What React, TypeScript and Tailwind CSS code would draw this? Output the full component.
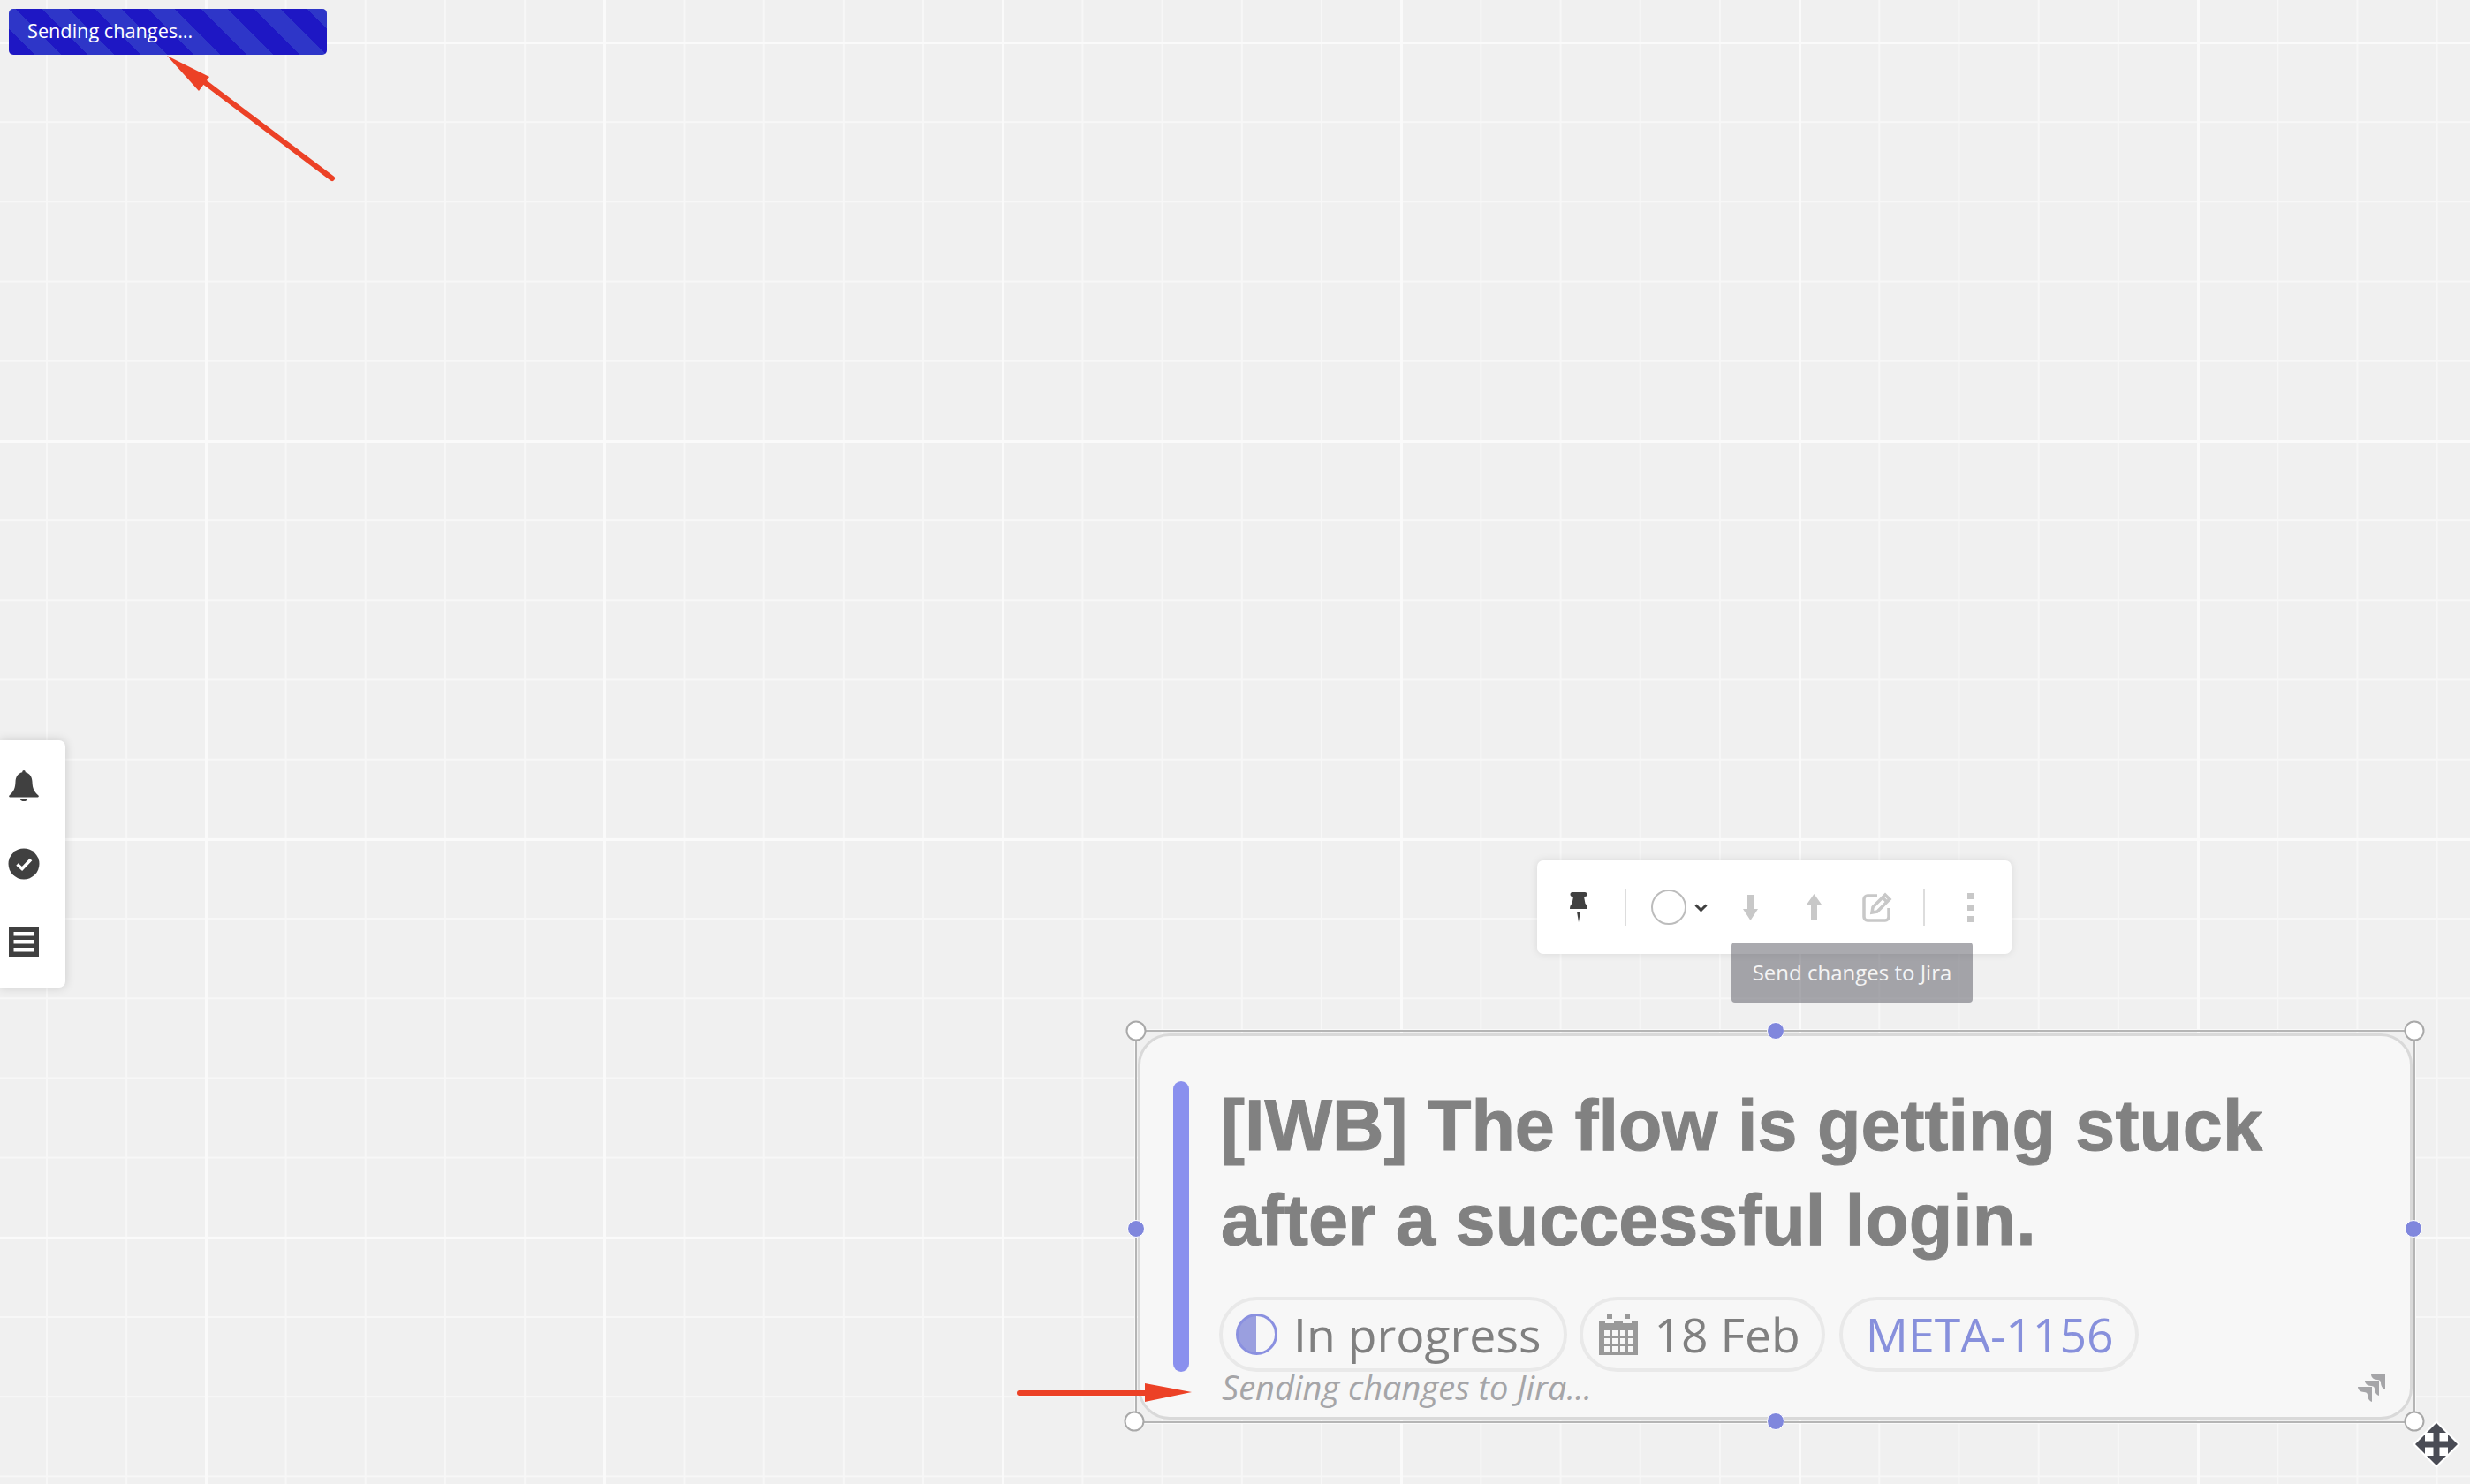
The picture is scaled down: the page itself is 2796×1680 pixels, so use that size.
const gridClass =
    "bg-[#f0f0f0] bg-[linear-gradient(to_right,#fafafa_3px,transparent_3px),linear-gradient(to_bottom,#fafafa_3px,transparent_3px),linear-gradient(to_right,#f7f7f7_2px,transparent_2px),linear-gradient(to_bottom,#f7f7f7_2px,transparent_2px)] [background-size:451px_451px,451px_451px,90.2px_90.2px,90.2px_90.2px] [background-position:232px_0,0_47px,52px_0,0_47px]"

const openSans = "font-['Open_Sans',sans-serif]"

const RedArrow = ({ className, viewBox, line, head }: { className: string; viewBox: string; line: string; head: string }) => (
    <svg className={className} viewBox={viewBox}>
        <path d={line} stroke="#ec4126" strokeWidth="6" strokeLinecap="round" fill="none" />
        <path d={head} fill="#ec4126" />
    </svg>
)

const Banner = () => (
    <div className={`absolute left-[10px] top-[10px] flex h-[52px] w-[360px] items-center rounded-[5px] pb-[1px] pl-[21px] text-[21.7px] text-white bg-[#1e17c4] bg-[repeating-linear-gradient(45deg,#1e17c4_0,#1e17c4_21.2px,#2e36c8_21.2px,#2e36c8_42.4px)] ${openSans}`}>
        Sending changes...
    </div>
)

const SidePanel = () => (
    <div className="absolute left-0 top-[838px] flex h-[280px] w-[74px] flex-col items-center gap-[53px] rounded-r-[7px] bg-white pl-[1px] pr-[21px] pt-[33px] shadow-[0_0_12px_rgba(0,0,0,0.16)]">
        <svg className="size-[36px] shrink-0" viewBox="0 0 36 36" fill="#404040">
            <path d="M18 1c1 0 1.700 .8 1.800 2.200 5 1.300 7.500 5.200 7.700 10.800.2 6.500 1.500 11 7 15.500.8.800.2 2-.8 2H2.300c-1 0-1.600-1.200-.8-2C7 25 8.300 20.500 8.500 14c.2-5.600 2.700-9.500 7.700-10.800C16.300 1.800 17 1 18 1z" />
            <path d="M13.500 33h9c-.3 2-2.200 3.200-4.500 3.200s-4.200-1.200-4.500-3.200z" />
        </svg>
        <svg className="size-[36px] shrink-0" viewBox="0 0 36 36">
            <circle cx="18" cy="18" r="17.500" fill="#404040" />
            <path d="M10.500 18.500l5.500 5 10-10.500" stroke="#fff" strokeWidth="3.600" fill="none" />
        </svg>
        <svg className="size-[34px] shrink-0" viewBox="0 0 34 34">
            <rect width="34" height="34" fill="#404040" />
            <rect x="5.500" y="6" width="23" height="4.500" fill="#fff" />
            <rect x="5.500" y="15" width="23" height="4.500" fill="#fff" />
            <rect x="5.500" y="24" width="23" height="4.500" fill="#fff" />
        </svg>
    </div>
)

const Toolbar = () => (
    <div className="absolute left-[1740px] top-[974px] flex h-[106px] w-[537px] items-start rounded-[7px] bg-white pt-[36px] shadow-[0_0_10px_rgba(0,0,0,0.1)]">
        <svg className="ml-[37px] h-[34px] w-[20px] shrink-0" viewBox="0 0 20 34" fill="#404040">
            <path d="M3 0h14a2.500 2.500 0 0 1 0 5h-1l1.500 8c1.500 1 2.500 3 2.500 6H0c0-3 1-5 2.500-6L4 5H3a2.500 2.500 0 0 1 0-5z" />
            <path d="M8 22h4l-2 12z" />
        </svg>
        <div className="ml-[42px] -mt-[4px] h-[42px] w-[2px] shrink-0 bg-[#dddddd]" />
        <div className="ml-[28px] -mt-[3px] size-[40px] shrink-0 rounded-full border-2 border-[#bcbcbc]" />
        <svg className="ml-[9px] mt-[13px] h-[10px] w-[15px] shrink-0" viewBox="0 0 15 10">
            <path d="M1.500 1.500l6 6 6-6" stroke="#404040" strokeWidth="3" fill="none" />
        </svg>
        <svg className="ml-[40px] mt-[3px] h-[29px] w-[17px] shrink-0" viewBox="0 0 17 29" fill="#c8c8c8">
            <path d="M5 0h7v16h5L8.500 29 0 16h5z" />
        </svg>
        <svg className="ml-[55px] mt-[2px] h-[29px] w-[17px] shrink-0" viewBox="0 0 17 29" fill="#c8c8c8">
            <path d="M5 29h7V12h5L8.500 0 0 12h5z" />
        </svg>
        <svg className="ml-[46px] h-[34px] w-[34px] shrink-0" viewBox="0 0 34 34" fill="none" stroke="#c8c8c8" strokeWidth="3.500">
            <path d="M17 4H6a4 4 0 0 0-4 4v20a4 4 0 0 0 4 4h20a4 4 0 0 0 4-4V18" />
            <path d="M12 17L26 3l5 5-14 14-6 1z" />
            <path d="M23 6l5 5" />
        </svg>
        <div className="ml-[35px] -mt-[4px] h-[42px] w-[2px] shrink-0 bg-[#dddddd]" />
        <div className="ml-[48px] mt-[1px] flex shrink-0 flex-col gap-[6px]">
            <div className="size-[7px] bg-[#c8c8c8]" />
            <div className="size-[7px] bg-[#c8c8c8]" />
            <div className="size-[7px] bg-[#c8c8c8]" />
        </div>
    </div>
)

const Tooltip = () => (
    <div className={`absolute left-[1960px] top-[1067px] flex h-[68px] w-[273px] items-center justify-center rounded-[4px] bg-[rgba(85,86,96,0.5)] text-[24px] text-[#f4f4f4] ${openSans}`}>
        Send changes to Jira
    </div>
)

const Pill = ({ children, className }: { children: React.ReactNode; className?: string }) => (
    <div className={`flex h-[85px] items-center gap-[18px] rounded-full border-[4px] border-[#e9e9e9] text-[53.5px] leading-none ${className ?? ""}`}>
        {children}
    </div>
)

const Card = () => (
    <div className="relative flex h-[437px] w-[1443px] rounded-[36px] border-[3px] border-[#d9d9d9] bg-[#f7f7f7] pl-[37px] pt-[51px]">
        <div className="h-[329px] w-[18px] shrink-0 rounded-full bg-[#8a90ee]" />
        <div className="ml-[36px] flex flex-col">
            <div className="-mt-[3px] font-['Liberation_Sans',sans-serif] text-[81px] font-bold leading-[107px] text-[#818181] [-webkit-text-stroke:1px_#818181]">
                [IWB] The flow is getting stuck<br />after a successful login.
            </div>
            <div className={`-ml-[2px] mt-[33px] flex gap-[14px] text-[#808080] ${openSans}`}>
                <Pill className="pl-[15px] pr-[26px]">
                    <div className="size-[47px] shrink-0 rounded-full border-[3px] border-[#8a90e0] bg-[linear-gradient(to_right,#9a9fdf_50%,transparent_50%)]" />
                    In progress
                </Pill>
                <Pill className="pl-[18px] pr-[24px]">
                    <svg className="h-[46px] w-[44px] shrink-0" viewBox="0 0 44 46" fill="#999999">
                        <path d="M9 0h6v5H9zM29 0h6v5h-6z" />
                        <path
                            fillRule="evenodd"
                            d="M0 7h7v3h10V7h10v3h10V7h7v39H0zM6 18v6h6v-6zm9 0v6h6v-6zm9 0v6h6v-6zm9 0v6h6v-6zM6 27v6h6v-6zm9 0v6h6v-6zm9 0v6h6v-6zm9 0v6h6v-6zM6 36v6h6v-6zm9 0v6h6v-6zm9 0v6h6v-6zm9 0v6h6v-6z"
                        />
                    </svg>
                    18 Feb
                </Pill>
                <Pill className="ml-[2px] pl-[26px] pr-[24px] text-[#8790dc]">META-1156</Pill>
            </div>
            <div className={`-mt-[8px] ml-[1px] text-[38px] italic leading-[50px] text-[#a5a5a8] ${openSans}`}>
                Sending changes to Jira...
            </div>
        </div>
        <svg className="absolute bottom-[17px] right-[28px] size-[31px]" viewBox="0 0 31 31" fill="#a5a5a8">
            <path d="M15 0h16v17c-3-1-5-4-5-8 0-2-2-3-4-3-4 0-7-3-7-6z" />
            <path d="M8 7h16v17c-3-1-5-4-5-8 0-2-2-3-4-3-4 0-7-3-7-6z" />
            <path d="M0 14h16v17c-3-1-5-4-5-8 0-2-2-3-4-3-4 0-7-3-7-6z" />
        </svg>
    </div>
)

const cornerHandle = "absolute size-[23px] rounded-full border-2 border-[#a9a9a9] bg-white"
const sideHandle = "absolute size-[20px] rounded-full border border-white bg-[#8087dd]"

const SelectedCard = () => (
    <div className="absolute left-[1285px] top-[1166px] border-2 border-[#b5b5b5] px-[1px] py-[2px] outline outline-1 outline-[#fafafa]">
        <Card />
        <div className={`${cornerHandle} -left-[1px] -top-[1px] -translate-x-1/2 -translate-y-1/2`} />
        <div className={`${cornerHandle} -right-[1px] -top-[1px] translate-x-1/2 -translate-y-1/2`} />
        <div className={`${cornerHandle} -left-[3px] bottom-0 -translate-x-1/2 translate-y-1/2`} />
        <div className={`${cornerHandle} -right-[1px] bottom-0 translate-x-1/2 translate-y-1/2`} />
        <div className={`${sideHandle} -top-[1px] left-1/2 -translate-x-1/2 -translate-y-1/2`} />
        <div className={`${sideHandle} bottom-0 left-1/2 -translate-x-1/2 translate-y-1/2`} />
        <div className={`${sideHandle} -left-[1px] top-1/2 mt-[2px] -translate-x-1/2 -translate-y-1/2`} />
        <div className={`${sideHandle} right-0 top-1/2 mt-[2px] translate-x-1/2 -translate-y-1/2`} />
    </div>
)

const MoveCursor = () => (
    <svg className="absolute left-[2731px] top-[1608px] size-[54px]" viewBox="-27 -27 54 54">
        <path d="M0-27L27 0 0 27-27 0z" fill="#fff" />
        <path d="M0-24L24 0 0 24-24 0z" fill="#4a4c55" />
        <path d="M-13-13h9.500v9.500H-13zM3.500-13H13v9.500H3.500zM-13 3.500h9.500V13H-13zM3.500 3.500H13V13H3.500z" fill="#fff" />
    </svg>
)

const App = () => {
    return (
        <div className={`relative h-[1680px] w-[2796px] overflow-hidden ${gridClass}`}>
            <Banner />
            <SidePanel />
            <Toolbar />
            <Tooltip />
            <SelectedCard />
            <MoveCursor />
            <RedArrow
                className="absolute left-[180px] top-[55px] h-[160px] w-[205px]"
                viewBox="0 0 205 160"
                line="M196 147L45 33"
                head="M9 8L57 32 45 48z"
            />
            <RedArrow
                className="absolute left-[1145px] top-[1550px] h-[45px] w-[210px]"
                viewBox="0 0 210 45"
                line="M9 27H160"
                head="M204 26L151 16v21z"
            />
        </div>
    )
}

export default App
